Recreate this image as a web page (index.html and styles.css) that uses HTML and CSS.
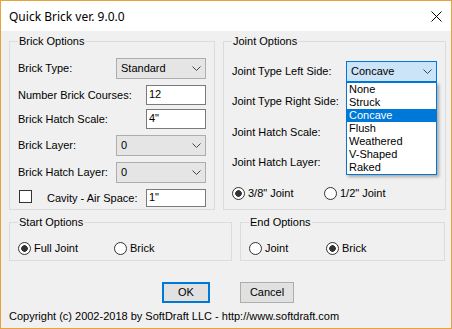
FILE: index.html
```html
<!DOCTYPE html>
<html lang="en">
<head>
    <meta charset="UTF-8">
    <title>Quick Brick ver. 9.0.0</title>
    <link rel="stylesheet" href="styles.css">
</head>
<body>
    <div class="window">
        <!-- Title bar -->
        <div class="titlebar">
            <span class="title">Quick Brick ver. 9.0.0</span>
            <svg class="close" width="11" height="11" viewBox="0 0 11 11">
                <path d="M0.5 0.5 L10.5 10.5 M10.5 0.5 L0.5 10.5" stroke="#000" stroke-width="1" fill="none"/>
            </svg>
        </div>

        <div class="content">
            <div class="top-row">
                <!-- Brick options -->
                <div class="group">
                    <div class="group-title">Brick Options</div>
                    <div class="rows brick-rows">
                        <div class="row">
                            <span>Brick Type:</span>
                            <div class="combo">
                                <span>Standard</span>
                                <svg class="chev" width="9" height="5" viewBox="0 0 9 5"><polyline points="0.5,0.5 4.5,4.5 8.5,0.5" fill="none" stroke="#444"/></svg>
                            </div>
                        </div>
                        <div class="row">
                            <span>Number Brick Courses:</span>
                            <div class="textbox">12</div>
                        </div>
                        <div class="row tight">
                            <span>Brick Hatch Scale:</span>
                            <div class="textbox">4"</div>
                        </div>
                        <div class="row">
                            <span>Brick Layer:</span>
                            <div class="combo">
                                <span>0</span>
                                <svg class="chev" width="9" height="5" viewBox="0 0 9 5"><polyline points="0.5,0.5 4.5,4.5 8.5,0.5" fill="none" stroke="#444"/></svg>
                            </div>
                        </div>
                        <div class="row">
                            <span>Brick Hatch Layer:</span>
                            <div class="combo">
                                <span>0</span>
                                <svg class="chev" width="9" height="5" viewBox="0 0 9 5"><polyline points="0.5,0.5 4.5,4.5 8.5,0.5" fill="none" stroke="#444"/></svg>
                            </div>
                        </div>
                        <div class="row">
                            <span class="check-label"><span class="checkbox"></span>Cavity - Air Space:</span>
                            <div class="textbox short">1"</div>
                        </div>
                    </div>
                </div>

                <!-- Joint options -->
                <div class="group">
                    <div class="group-title">Joint Options</div>
                    <div class="rows joint-rows">
                        <div class="row">
                            <span>Joint Type Left Side:</span>
                            <div class="combo joint open">
                                <span>Concave</span>
                                <svg class="chev" width="9" height="5" viewBox="0 0 9 5"><polyline points="0.5,0.5 4.5,4.5 8.5,0.5" fill="none" stroke="#444"/></svg>
                                <ul class="dropdown">
                                    <li>None</li>
                                    <li>Struck</li>
                                    <li class="selected">Concave</li>
                                    <li>Flush</li>
                                    <li>Weathered</li>
                                    <li>V-Shaped</li>
                                    <li>Raked</li>
                                </ul>
                            </div>
                        </div>
                        <!-- these three controls sit under the open list -->
                        <div class="row">
                            <span>Joint Type Right Side:</span>
                            <div class="combo joint"></div>
                        </div>
                        <div class="row">
                            <span>Joint Hatch Scale:</span>
                            <div class="textbox joint"></div>
                        </div>
                        <div class="row">
                            <span>Joint Hatch Layer:</span>
                            <div class="combo joint"></div>
                        </div>
                        <div class="radio-row">
                            <label class="radio w92"><span class="dot checked"></span>3/8" Joint</label>
                            <label class="radio"><span class="dot"></span>1/2" Joint</label>
                        </div>
                    </div>
                </div>
            </div>

            <div class="bottom-row">
                <div class="group">
                    <div class="group-title">Start Options</div>
                    <div class="radio-row small">
                        <label class="radio w96"><span class="dot checked"></span>Full Joint</label>
                        <label class="radio"><span class="dot"></span>Brick</label>
                    </div>
                </div>
                <div class="group">
                    <div class="group-title">End Options</div>
                    <div class="radio-row small">
                        <label class="radio w77"><span class="dot"></span>Joint</label>
                        <label class="radio"><span class="dot checked"></span>Brick</label>
                    </div>
                </div>
            </div>

            <div class="buttons">
                <div class="btn default">OK</div>
                <div class="btn">Cancel</div>
            </div>

            <div class="copyright">Copyright (c) 2002-2018 by SoftDraft LLC - http://www.softdraft.com</div>
        </div>
    </div>
</body>
</html>
```

FILE: styles.css
```css
* {
    box-sizing: border-box;
}
body {
    margin: 0;
    font-family: 'Liberation Sans', Arial, sans-serif;
    font-size: 11px;
    color: #000;
}

.window {
    width: 452px;
    height: 329px;
    border: 1px solid #e9a23b;
    display: flex;
    flex-direction: column;
    background-color: #f0f0f0;
}

.titlebar {
    height: 30px;
    background-color: #ffffff;
    display: flex;
    align-items: center;
    justify-content: space-between;
    padding: 0 9px 0 8px;
}

.title {
    font-family: 'Noto Sans', sans-serif;
    font-size: 12px;
}

.close {
    display: block;
    margin-top: 1px;
}

.content {
    flex: 1;
    padding: 10px 6px 0 8px;
    line-height: 13px;
}

.top-row {
    display: grid;
    grid-template-columns: 206px 223px;
    column-gap: 8px;
    height: 169px;
}

.bottom-row {
    display: grid;
    grid-template-columns: 223px 205px;
    column-gap: 8px;
    height: 39px;
    margin-top: 12px;
}

.group {
    border: 1px solid #dcdcdc;
    padding: 0 8px;
}

.group-title {
    width: fit-content;
    margin: -7px 0 0 0;
    padding: 0 1px;
    background-color: #f0f0f0;
    height: 13px;
}

.rows {
    display: flex;
    flex-direction: column;
}
.brick-rows {
    margin-top: 10px;
}
.joint-rows {
    margin-top: 13px;
}

.row {
    display: flex;
    align-items: center;
    justify-content: space-between;
}
.brick-rows .row + .row {
    margin-top: 6px;
}
.brick-rows .row.tight {
    margin-top: 4px;
}
.joint-rows .row + .row {
    margin-top: 10px;
}
.joint-rows .row:nth-child(2) {
    margin-top: 9px;
}

/* combo boxes */
.combo {
    position: relative;
    width: 90px;
    height: 21px;
    border: 1px solid #adadad;
    background-color: #e5e5e5;
    display: flex;
    align-items: center;
    justify-content: space-between;
    padding: 0 4px 0 4px;
}
.combo.joint {
    width: 91px;
}
.combo.open {
    border-color: #0078d7;
    background-color: #cce4f7;
}
.chev {
    display: block;
}

.dropdown {
    position: absolute;
    top: calc(100% + 1px);
    left: -1px;
    width: 91px;
    margin: 0;
    padding: 0;
    list-style: none;
    background-color: #ffffff;
    border: 1px solid #0078d7;
    box-shadow: 2px 2px 3px rgba(0, 0, 0, 0.3);
    z-index: 10;
}
.dropdown li {
    height: 13px;
    line-height: 13px;
    padding-left: 2px;
}
.dropdown li.selected {
    background-color: #0078d7;
    color: #ffffff;
}

/* text boxes */
.textbox {
    width: 60px;
    height: 20px;
    border: 1px solid #7a7a7a;
    background-color: #ffffff;
    padding: 2px 0 0 2px;
}
.textbox.short {
    height: 18px;
    padding-top: 1px;
}
.textbox.joint {
    width: 91px;
}

.check-label {
    display: flex;
    align-items: center;
}
.checkbox {
    width: 13px;
    height: 13px;
    border: 1px solid #333;
    background-color: #fff;
    margin: 0 15px 0 1px;
    position: relative;
    top: -2px;
}

/* radio buttons */
.radio-row {
    display: flex;
    align-items: center;
    margin-top: 14px;
}
.radio-row.small {
    margin-top: 13px;
}
.radio {
    display: flex;
    align-items: center;
}
.w92 { width: 92px; }
.w96 { width: 96px; }
.w77 { width: 77px; }
.dot {
    width: 13px;
    height: 13px;
    border: 1px solid #333;
    border-radius: 50%;
    background-color: #fff;
    margin-right: 3px;
}
.dot.checked {
    background: radial-gradient(circle, #333 0, #333 3px, #fff 3.6px);
}

.buttons {
    display: flex;
    justify-content: center;
    gap: 30px;
    margin-top: 21px;
    padding-left: 2px;
}
.btn {
    height: 21px;
    width: 54px;
    border: 1px solid #adadad;
    background-color: #e1e1e1;
    display: flex;
    align-items: center;
    justify-content: center;
}
.btn.default {
    width: 48px;
    border: 2px solid #0078d7;
}

.copyright {
    margin-top: 7px;
}
```
